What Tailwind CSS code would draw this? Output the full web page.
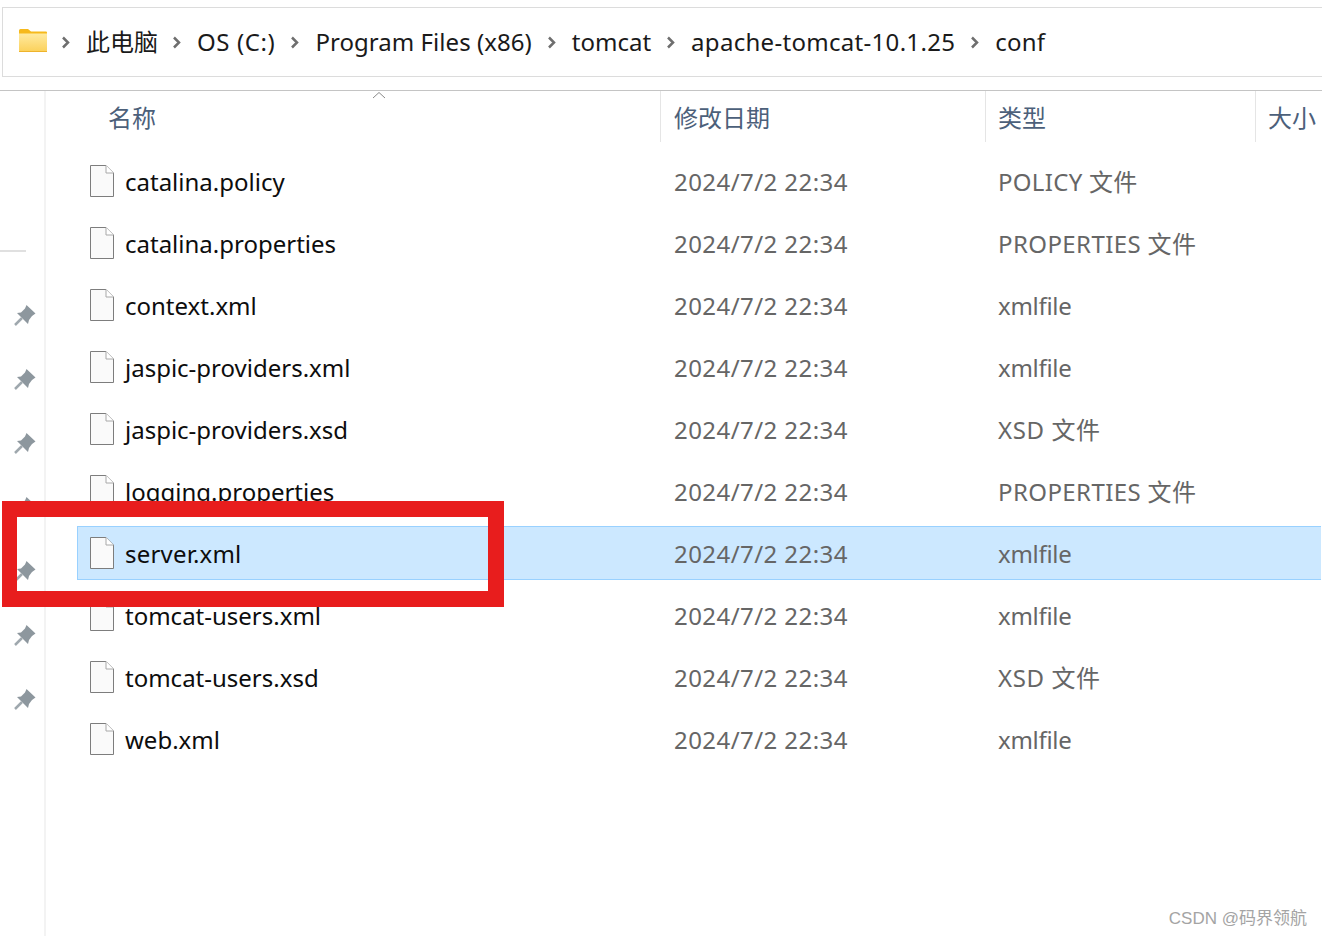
<!DOCTYPE html>
<html lang="zh-CN">
<head>
  <meta charset="UTF-8" />
  <title>conf</title>
  <script src="https://cdn.jsdelivr.net/npm/@tailwindcss/browser@4"></script>
</head>
<body class="bg-white">
  <div class="relative w-[1322px] h-[936px] overflow-hidden bg-white font-['Noto_Sans','Noto_Sans_CJK_SC',sans-serif] text-[24px]">

    <!-- address bar -->
    <div class="pt-[7px] pl-[2px] h-[91px] border-b border-[#c4c4c4]">
      <div id="crumbs" class="h-[70px] border border-[#dcdcdc] border-r-0 flex items-center pl-[16px] text-[#1a1a1a]">
        <svg width="28" height="23" viewBox="0 0 28 23" class="shrink-0 mb-[3px]">
          <defs>
            <linearGradient id="fold" x1="0" y1="0" x2="0" y2="1">
              <stop offset="0" stop-color="#ffeaa0" />
              <stop offset="1" stop-color="#fbd15b" />
            </linearGradient>
          </defs>
          <path d="M0 1.500a1.500 1.500 0 0 1 1.500-1.500h7.500l3 2.500h15a1 1 0 0 1 1 1v3h-28z" fill="#f6b91c" />
          <path d="M0 4.500h28v17a1 1 0 0 1-1 1h-26a1 1 0 0 1-1-1z" fill="url(#fold)" />
          <path d="M0 22.500h28" stroke="#eeb32c" stroke-width="1" />
        </svg>
      </div>
    </div>

    <div class="flex h-[845px]">
      <!-- nav pane -->
      <div class="w-[46px] shrink-0 border-r-2 border-[#f3f3f3]">
        <div class="mt-[159px] w-[26px] h-[2px] bg-[#e0e0e0]"></div>
        <div id="pins" class="mt-[53px] pl-[14px] flex flex-col gap-[43px]"></div>
      </div>

      <div class="flex-1 min-w-0">
        <!-- column headers -->
        <div class="relative flex h-[63px] text-[#4c607a]">
          <div class="w-[615px] h-[51px] flex items-center pl-[62px] pt-[2px] border-r border-[#e5e5e5]">名称</div>
          <div class="w-[325px] h-[51px] flex items-center pl-[13px] pt-[2px] border-r border-[#e5e5e5]">修改日期</div>
          <div class="w-[270px] h-[51px] flex items-center pl-[12px] pt-[2px] border-r border-[#e5e5e5]">类型</div>
          <div class="h-[51px] flex items-center pl-[12px] pt-[2px] whitespace-nowrap">大小</div>
          <svg width="14" height="8" viewBox="0 0 14 8" class="absolute left-[326px] top-0">
            <path d="M1 7l6-5.500 6 5.500" fill="none" stroke="#8a8a8a" stroke-width="1" />
          </svg>
        </div>

        <!-- file rows -->
        <div id="rows" class="ml-[31px] mr-[1px] flex flex-col gap-[8px]"></div>
      </div>
    </div>

    <!-- red annotation -->
    <div class="absolute left-[2px] top-[501px] w-[502px] h-[106px] border-[16px] border-l-[15px] border-[#e81d1d]"></div>

    <div class="absolute right-[15px] top-[906px] text-[17px] text-[#a4a4a4] font-['Liberation_Sans','Noto_Sans_CJK_SC',sans-serif]">CSDN @码界领航</div>
  </div>

  <script>
    const crumbs = [
      ["此电脑", "ml-[14px] mr-[16px]", ""],
      ["OS (C:)", "ml-[14px] mr-[16px]", "tracking-[0.6px]"],
      ["Program Files (x86)", "ml-[15px] mr-[16px]", "tracking-[0.05px]"],
      ["tomcat", "ml-[15px] mr-[16px]", ""],
      ["apache-tomcat-10.1.25", "ml-[15px] mr-[16px]", "tracking-[0.3px]"],
      ["conf", "ml-[15px] mr-[16px]", "tracking-[0.2px]"],
    ];
    const crumbBox = document.getElementById("crumbs");
    crumbs.forEach(([text, gap, track]) => {
      crumbBox.insertAdjacentHTML("beforeend", `
        <svg width="9" height="13" viewBox="0 0 9 13" class="shrink-0 ${gap}"><path d="M2 1.500L7 6.500 2 11.500" fill="none" stroke="#6e6e6e" stroke-width="2.500" /></svg>
        <span class="whitespace-nowrap ${track}">${text}</span>`);
    });

    const pinBox = document.getElementById("pins");
    for (let i = 0; i < 7; i++) {
      pinBox.insertAdjacentHTML("beforeend", `
        <svg width="22" height="21" viewBox="0 0 22 21" class="block">
          <path d="M12.500 0L21.500 8.500 18 11 15 15 14 19 3 8 7 7.500 11 3.500z" fill="#8d979e" />
          <path d="M8 13L1 20" stroke="#9fa8ae" stroke-width="2.500" />
        </svg>`);
    }

    const files = [
      ["catalina.policy", "POLICY 文件", "tracking-[0.3px]", ""],
      ["catalina.properties", "PROPERTIES 文件", "tracking-[0.4px]", ""],
      ["context.xml", "xmlfile", "tracking-[-0.3px]", ""],
      ["jaspic-providers.xml", "xmlfile", "tracking-[-0.3px]", ""],
      ["jaspic-providers.xsd", "XSD 文件", "tracking-[0.6px]", ""],
      ["logging.properties", "PROPERTIES 文件", "tracking-[0.4px]", ""],
      ["server.xml", "xmlfile", "tracking-[-0.3px]", "tracking-[0.2px]", true],
      ["tomcat-users.xml", "xmlfile", "tracking-[-0.3px]", ""],
      ["tomcat-users.xsd", "XSD 文件", "tracking-[0.6px]", ""],
      ["web.xml", "xmlfile", "tracking-[-0.3px]", ""],
    ];
    const rowBox = document.getElementById("rows");
    files.forEach(([name, type, track, nameTrack, selected]) => {
      const bg = selected ? "bg-[#cce8ff] border-[#99d1ff]" : "border-transparent";
      rowBox.insertAdjacentHTML("beforeend", `
        <div class="h-[54px] flex items-center border border-r-0 ${bg}">
          <div class="w-[596px] shrink-0 flex items-center pl-[12px]">
            <svg width="24" height="32" viewBox="0 0 24 32" class="shrink-0">
              <path d="M.5.500h15.500l7.500 7.500v23.500h-23z" fill="#fafafa" stroke="#7d7d7d" />
              <path d="M16 .500v7.500h7.500" fill="#fff" stroke="#a8a8a8" />
            </svg>
            <span class="ml-[11px] pt-[2px] text-[#0d0d0d] whitespace-nowrap ${nameTrack}">${name}</span>
          </div>
          <div class="w-[324px] shrink-0 pt-[2px] text-[#666666] tracking-[0.43px]">2024/7/2 22:34</div>
          <div class="pt-[2px] text-[#666666] whitespace-nowrap ${track}">${type}</div>
        </div>`);
    });
  </script>
</body>
</html>
